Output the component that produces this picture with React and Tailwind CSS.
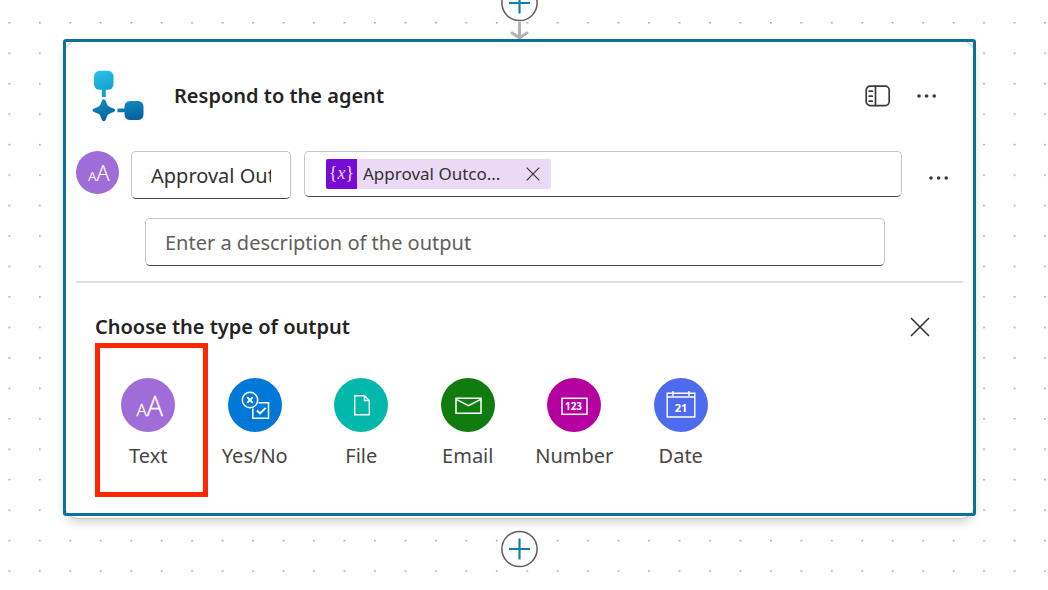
import React from "react";

function DotGrid() {
  return (
    <svg className="absolute inset-0 -z-10 h-full w-full" aria-hidden="true">
      <defs>
        <pattern id="dots" x="8.5" y="22" width="30.46" height="30.46" patternUnits="userSpaceOnUse">
          <rect width="1.7" height="1.5" fill="#a3a3a3" />
        </pattern>
      </defs>
      <rect width="100%" height="100%" fill="url(#dots)" />
    </svg>
  );
}

function AddStepButton() {
  return (
    <button type="button" aria-label="Add a step" className="block h-[38px] w-[38px] shrink-0">
      <svg viewBox="0 0 38 38" className="h-full w-full">
        <circle cx="18.5" cy="19" r="17.6" fill="#fff" stroke="#605e5c" strokeWidth="1.5" />
        <path d="M18.5 8.5v21M8 19h21" stroke="#1080aa" strokeWidth="2.2" fill="none" />
      </svg>
    </button>
  );
}

function Arrow() {
  return (
    <svg viewBox="0 0 20 18" className="h-[18px] w-5" aria-hidden="true">
      <path d="M9.5 0v15.500M2 11l7.500 4.800L17 11" fill="none" stroke="#b1b1b7" strokeWidth="3" strokeLinejoin="round" strokeLinecap="round" />
    </svg>
  );
}

function AgentLogo() {
  return (
    <svg viewBox="0 0 52 52" className="h-[52px] w-[52px] shrink-0" aria-hidden="true">
      <defs>
        <linearGradient id="top" x1="0" y1="0" x2="0.3" y2="1">
          <stop offset="0" stopColor="#26c3ec" />
          <stop offset="1" stopColor="#189ac8" />
        </linearGradient>
        <linearGradient id="low" x1="0" y1="0" x2="0.3" y2="1">
          <stop offset="0" stopColor="#148fc3" />
          <stop offset="1" stopColor="#0663a0" />
        </linearGradient>
      </defs>
      <path d="M7.500 0.800h8.500a5.500 5.500 0 0 1 5.500 5.500v8a5.500 5.500 0 0 1-5.500 5.500h-2.200v7.300h-4v-7.300H7.500A5.500 5.500 0 0 1 2 14.300V6.300a5.500 5.500 0 0 1 5.500-5.500Z" fill="url(#top)" />
      <path d="M11.800 29.300c1.300 0 1.800 1 2.300 2.500 1.200 3.700 2 4.700 5.500 6 2 .7 3.500 1.200 3.500 2.500s-1.500 1.800-3.500 2.500c-3.500 1.300-4.300 2.300-5.500 6-.5 1.500-1 2.500-2.300 2.500s-1.800-1-2.300-2.500c-1.200-3.700-2-4.700-5.500-6C2 42.100.5 41.600.5 40.300s1.500-1.800 3.500-2.500c3.500-1.300 4.300-2.300 5.500-6 .5-1.500 1-2.500 2.300-2.500Z" fill="url(#low)" />
      <path d="M25.500 38.500h7v-2a5.500 5.500 0 0 1 5.500-5.500h8a5.500 5.500 0 0 1 5.500 5.500v8a5.500 5.500 0 0 1-5.500 5.500h-8a5.500 5.500 0 0 1-5.500-5.500v-2.200h-7Z" fill="url(#low)" />
    </svg>
  );
}

function PanelIcon() {
  return (
    <svg viewBox="0 0 26 22" className="h-[22px] w-[26px]" fill="none" stroke="#3b3a39" strokeWidth="1.7" strokeLinecap="round" aria-hidden="true">
      <rect x="1.200" y="1.200" width="23" height="19.400" rx="4" />
      <path d="M10.500 1.200v19.400M4.200 6.200h3M4.200 11.200h3M4.200 16.200h3" />
    </svg>
  );
}

function MoreIcon() {
  return (
    <svg viewBox="0 0 20 6" className="h-[6px] w-5" fill="#3b3a39" aria-hidden="true">
      <circle cx="2" cy="3" r="1.800" />
      <circle cx="9.600" cy="3" r="1.800" />
      <circle cx="17.200" cy="3" r="1.800" />
    </svg>
  );
}

function CloseIcon({ className }) {
  return (
    <svg viewBox="0 0 20 20" className={className} fill="none" stroke="#323130" strokeWidth="1.600" aria-hidden="true">
      <path d="M1 1l18 18M19 1L1 19" />
    </svg>
  );
}

function TextIcon({ className }) {
  return (
    <svg viewBox="0 0 54 54" className={className} aria-hidden="true">
      <text x="15.500" y="38" fill="#fff" stroke="#fff" strokeWidth="0.300" fontFamily="Open Sans, sans-serif" fontWeight="300">
        <tspan fontSize="17">A</tspan>
        <tspan fontSize="27">A</tspan>
      </text>
    </svg>
  );
}

function YesNoIcon({ className }) {
  return (
    <svg viewBox="0 0 54 54" className={className} fill="none" stroke="#fff" strokeWidth="1.500" aria-hidden="true">
      <circle cx="22" cy="22" r="7.700" />
      <path d="M19.200 19.200l5.600 5.600M24.800 19.200l-5.600 5.600" strokeWidth="1.900" />
      <path d="M30.500 24.700h10v15.600H24.800V30.500" />
      <path d="M29 32.500l3 3 5.700-5.700" strokeWidth="1.900" />
    </svg>
  );
}

function FileIcon({ className }) {
  return (
    <svg viewBox="0 0 54 54" className={className} fill="none" stroke="#fff" strokeWidth="1.400" aria-hidden="true">
      <path d="M20.700 17.700h9.800l4.800 4.800v14.300H20.700ZM30.500 17.700v4.800h4.800" />
    </svg>
  );
}

function EmailIcon({ className }) {
  return (
    <svg viewBox="0 0 54 54" className={className} fill="none" stroke="#fff" strokeWidth="1.500" aria-hidden="true">
      <path d="M15 20.300h25v15H15ZM15.300 21.300l12.200 6.400 12.200-6.400" />
    </svg>
  );
}

function NumberIcon({ className }) {
  return (
    <svg viewBox="0 0 54 54" className={className} aria-hidden="true">
      <rect x="15" y="20.300" width="25" height="16" fill="none" stroke="#fff" strokeWidth="1.500" />
      <text x="26.500" y="32.300" textAnchor="middle" fill="#fff" fontSize="10" fontWeight="700" fontFamily="Open Sans, sans-serif">123</text>
    </svg>
  );
}

function DateIcon({ className }) {
  return (
    <svg viewBox="0 0 54 54" className={className} aria-hidden="true">
      <path d="M13.200 15.200h27.600v23.800H13.200ZM13.200 19h27.600M19 13v5M35 13v5" fill="none" stroke="#fff" strokeWidth="1.400" />
      <text x="27" y="34" textAnchor="middle" fill="#fff" fontSize="11" fontWeight="700" fontFamily="Open Sans, sans-serif">21</text>
    </svg>
  );
}

const outputTypes = [
  { label: "Text", color: "bg-[#a06cd8]", Icon: TextIcon, highlighted: true },
  { label: "Yes/No", color: "bg-[#0078d7]", Icon: YesNoIcon },
  { label: "File", color: "bg-[#02b8ab]", Icon: FileIcon },
  { label: "Email", color: "bg-[#107c10]", Icon: EmailIcon },
  { label: "Number", color: "bg-[#b4009e]", Icon: NumberIcon },
  { label: "Date", color: "bg-[#4f6bed]", Icon: DateIcon },
];

function OutputType({ label, color, Icon, highlighted }) {
  return (
    <button type="button" className="relative flex flex-col items-center gap-2 pt-[35px] pb-6">
      <span className={`flex h-[54px] w-[54px] items-center justify-center rounded-full ${color}`}>
        <Icon className="h-[54px] w-[54px]" />
      </span>
      <span className="text-xl leading-8 text-[#484644]">{label}</span>
      {highlighted && (
        <span className="absolute top-0 -right-[6px] -bottom-px left-0 border-[5px] border-[#ff2600]" />
      )}
    </button>
  );
}

const fieldBorder = "rounded-[5px] border border-[#c8c6c4] border-b-[#484644] bg-white";

export default function App() {
  return (
    <main className="relative isolate flex min-h-screen flex-col items-center overflow-hidden bg-white pr-[73px] pl-[64px] font-['Noto_Sans',sans-serif] text-[#242424]">
      <DotGrid />
      <div className="-mt-4 flex flex-col items-center">
        <AddStepButton />
        <Arrow />
      </div>

      <section className="relative w-full rounded-[14px] border border-[#c8c6c4] bg-white pb-[22px] shadow-[0_4px_10px_rgba(0,0,0,0.16)]">
        <div className="pointer-events-none absolute -top-[2px] -right-[2px] bottom-[2px] -left-[2px] rounded-[3px] border-[3px] border-[#0b7199]" />

        <header className="flex items-center pt-[29px] pr-[37px] pl-[27px]">
          <AgentLogo />
          <h1 className="ml-[30px] flex-1 text-xl font-semibold">Respond to the agent</h1>
          <button type="button" aria-label="Toggle details panel" className="mr-[26px]">
            <PanelIcon />
          </button>
          <button type="button" aria-label="More commands">
            <MoreIcon />
          </button>
        </header>

        <div className="mt-[29px] flex items-start pr-[25px] pl-[11px]">
          <span className="mr-3 flex h-[43px] w-[43px] shrink-0 rounded-full bg-[#a06cd8]">
            <TextIcon className="h-[43px] w-[43px]" />
          </span>
          <input
            aria-label="Output name"
            defaultValue="Approval Outcome"
            className={`mr-[13px] h-12 w-[160px] px-[19px] text-xl text-[#323130] ${fieldBorder}`}
          />
          <div className={`flex h-[46px] min-w-0 flex-1 items-center px-[21px] ${fieldBorder}`}>
            <span className="flex h-[30px] w-[225px] items-center rounded-[2px] bg-[#ebdaf7] text-[17px] text-[#323130]">
              <span className="mr-1.5 flex h-[30px] w-[31px] shrink-0 items-center justify-center rounded-l-[2px] bg-[#770bd6] pb-[3px] font-['Liberation_Serif',serif] text-lg text-[#ebdaf7]">
                {"{"}<i>x</i>{"}"}
              </span>
              <span className="flex-1 whitespace-nowrap">Approval Outco...</span>
              <button type="button" aria-label="Remove value" className="mr-[11px]">
                <CloseIcon className="h-[14px] w-[14px]" />
              </button>
            </span>
          </div>
          <button type="button" aria-label="Output options" className="mt-6 ml-[27px]">
            <MoreIcon />
          </button>
        </div>

        <div className="mt-[19px] flex pr-[89px] pl-[80px]">
          <input
            aria-label="Output description"
            placeholder="Enter a description of the output"
            className={`h-12 w-full px-[19px] text-xl placeholder:text-[#605e5c] ${fieldBorder}`}
          />
        </div>

        <hr className="mt-[15px] mr-[11px] ml-[11px] border-t-2 border-[#e1dfdd]" />

        <div className="mt-7 flex items-center justify-between pr-11 pl-[30px]">
          <h2 className="text-xl leading-8 font-semibold">Choose the type of output</h2>
          <button type="button" aria-label="Close">
            <CloseIcon className="h-5 w-5" />
          </button>
        </div>

        <div className="ml-[30px] grid w-[639px] max-w-full grid-cols-6">
          {outputTypes.map((type) => (
            <OutputType key={type.label} {...type} />
          ))}
        </div>
      </section>

      <div className="mt-[11px]">
        <AddStepButton />
      </div>
    </main>
  );
}
